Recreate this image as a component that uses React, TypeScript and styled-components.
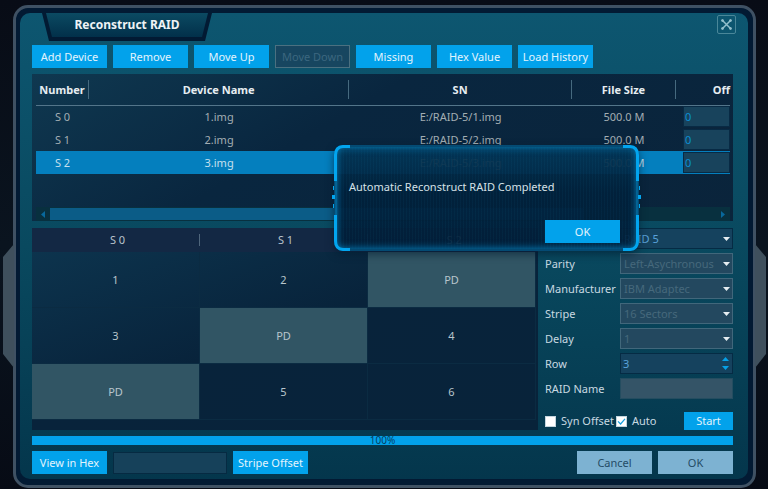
import React, { useState } from "react";
import styled, { createGlobalStyle, css } from "styled-components";

const GlobalStyle = createGlobalStyle`
  *, *::before, *::after { box-sizing: border-box; }
  body {
    margin: 0;
    background: #0a121c;
    color: #cfd8dd;
    font-family: "Noto Sans", "Open Sans", sans-serif;
    font-size: 11px;
    line-height: 16px;
  }
  button, input, select { font: inherit; margin: 0; }
`;

const Page = styled.div`
  display: flex;
  min-height: 100vh;
  padding: 5px 12px 1px 13px;
  background: linear-gradient(#080c16, #0a141f 50%, #070b15);
`;

const Frame = styled.main`
  position: relative;
  flex: 1;
  display: flex;
  border: 3px solid #3f5163;
  border-radius: 15px;
  background: #021a33;
  padding: 5px 5px 6px 4px;
`;

const Handle = styled.svg<{ $side: "left" | "right" }>`
  position: absolute;
  top: 236px;
  ${(p) => p.$side}: -13px;
  width: 11px;
  height: 124px;
  fill: #3f505d;
  ${(p) => p.$side === "right" && css`transform: scaleX(-1);`}
`;

const Panel = styled.div`
  position: relative;
  flex: 1;
  min-width: 0;
  display: flex;
  flex-direction: column;
  padding: 0 15px 5px 12px;
  border-radius: 10px;
  background: linear-gradient(#0d5670, #09495f 50%, #04364c);
`;

const TitleBar = styled.header`
  display: flex;
  justify-content: space-between;
  margin: 0 -3px 4px 10px;
`;

const TitleTab = styled.div`
  width: 170px;
  height: 28px;
  padding: 0 4px 4px;
  background: #021a33;
  clip-path: polygon(0 0, 100% 0, calc(100% - 7px) 100%, 7px 100%);
`;

const Title = styled.h1`
  margin: 0;
  height: 24px;
  font-size: 12px;
  line-height: 24px;
  text-align: center;
  color: #eef3f5;
  background: linear-gradient(#0b4a62, #02304a);
  clip-path: polygon(0 0, 100% 0, calc(100% - 6px) 100%, 6px 100%);
`;

const CloseButton = styled.button`
  display: grid;
  place-items: center;
  width: 19px;
  height: 19px;
  margin-top: 2px;
  padding: 0;
  border: 1px solid #4a8799;
  border-radius: 2px;
  background: transparent;
  svg { width: 13px; height: 13px; stroke: #93bfcc; fill: #93bfcc; }
`;

const Toolbar = styled.div`
  display: flex;
  gap: 6px;
  margin-bottom: 6px;
`;

const Button = styled.button<{ $muted?: boolean; $small?: boolean }>`
  min-width: ${(p) => (p.$small ? 49 : 75)}px;
  height: ${(p) => (p.$small ? 18 : 23)}px;
  padding: 0;
  border: 0;
  white-space: nowrap;
  color: ${(p) => (p.$muted ? "#244c66" : "#e2f4fd")};
  background: ${(p) => (p.$muted ? "#7db2d2" : "#02a2eb")};
  &:disabled {
    color: #3c677f;
    background: #174660;
    border: 1px solid #4b7080;
  }
`;

const DevicePanel = styled.section`
  display: flex;
  flex-direction: column;
  min-height: 147px;
  margin-bottom: 7px;
  padding: 0 3px 0 4px;
  background: linear-gradient(150deg, #0f3850, #09263f 40%, #0a243b);
`;

const DeviceTable = styled.table`
  width: 100%;
  table-layout: fixed;
  border-collapse: collapse;
  text-align: center;
`;

const HeadRow = styled.tr`
  height: 31px;
  border-bottom: 1px solid #53758a;
`;

const HeadCell = styled.th`
  padding: 0;
  color: #e6edf1;
  white-space: nowrap;
`;

const HeadLabel = styled.span<{ $last?: boolean }>`
  display: block;
  height: 19px;
  line-height: 19px;
  ${(p) => (p.$last ? css`text-align: right;` : css`border-right: 1px solid #466a7f;`)}
`;

const DeviceRow = styled.tr<{ $selected: boolean }>`
  height: 23px;
  color: ${(p) => (p.$selected ? "#c6e0ee" : "#a3aeb3")};
  background: ${(p) => (p.$selected ? "#047fbe" : "transparent")};
`;

const Col = styled.col<{ $w?: string }>`
  width: ${(p) => p.$w ?? "auto"};
`;

const Cell = styled.td`
  padding: 0;
  line-height: 20px;
`;

const OffsetCell = styled(Cell)`
  padding-left: 7px;
`;

const OffsetInput = styled.input`
  display: block;
  width: 100%;
  height: 21px;
  padding: 0 1px;
  border: 1px solid #082a44;
  background: #18435c;
  color: #0a8fd3;
`;

const ScrollBar = styled.div`
  display: grid;
  grid-template-columns: 14px 1fr 14px;
  height: 14px;
  margin-top: auto;
  background: #08303f;
`;

const ScrollArrow = styled.button`
  display: grid;
  place-items: center;
  padding: 0;
  border: 0;
  background: transparent;
  svg { width: 4px; height: 7px; fill: #08689c; }
`;

const ScrollThumb = styled.div`
  width: 80%;
  height: 12px;
  margin-top: 1px;
  background: #0b5c87;
`;

const Workspace = styled.div`
  display: grid;
  grid-template-columns: minmax(0, 1fr) 188px;
  gap: 7px;
  margin-bottom: 6px;
`;

const LayoutPanel = styled.div`
  padding: 0 2px 10px 0;
  background:
    linear-gradient(#132844, #132844) top / 100% 24px no-repeat,
    linear-gradient(160deg, #0d3650, #08233b 50%, #08233a);
`;

const Layout = styled.table`
  width: 100%;
  table-layout: fixed;
  border-collapse: separate;
  border-spacing: 0;
  text-align: center;
`;

const LayoutHead = styled.th`
  height: 24px;
  padding: 0;
  font-weight: 400;
  color: #b9c4cc;
`;

const LayoutHeadLabel = styled.span<{ $line: boolean }>`
  display: block;
  height: 12px;
  padding-left: 4px;
  line-height: 12px;
  ${(p) => p.$line && css`border-right: 1px solid #4f667c;`}
`;

const LayoutCell = styled.td<{ $parity: boolean }>`
  height: 56px;
  padding: 0;
  color: #b8c5cc;
  border: solid #0b2b42;
  border-width: 0 1px 1px 0;
  ${(p) => p.$parity && css`background: #315564;`}
`;

const Form = styled.form`
  display: flex;
  flex-direction: column;
  justify-content: space-between;
`;

const Fields = styled.div`
  display: grid;
  grid-template-columns: 75px 1fr;
  grid-auto-rows: 21px;
  row-gap: 4px;
  align-items: center;
`;

const FieldLabel = styled.label`
  color: #c8d9e1;
  white-space: nowrap;
`;

const Control = styled.div`
  position: relative;
  grid-column: 2;
  height: 21px;
`;

const Select = styled.select`
  appearance: none;
  width: 100%;
  height: 100%;
  padding: 0 0 0 3px;
  border: 1px solid #052b44;
  border-radius: 0;
  background: #15425e;
  color: #5aa2da;
  &:disabled {
    opacity: 1;
    border-color: #41677b;
    background: #23485f;
    color: #46697c;
  }
`;

const Caret = styled.svg`
  position: absolute;
  right: 3px;
  top: 9px;
  width: 7px;
  height: 4px;
  fill: #e6eef2;
  pointer-events: none;
`;

const TextInput = styled.input<{ $flat?: boolean }>`
  appearance: textfield;
  width: 100%;
  height: 100%;
  padding: 0 2px;
  border: 1px solid ${(p) => (p.$flat ? "#244d60" : "#052b44")};
  background: ${(p) => (p.$flat ? "#345467" : "#15425e")};
  color: #5aa2da;
  &::-webkit-inner-spin-button { appearance: none; }
`;

const Spinner = styled.div`
  position: absolute;
  right: 4px;
  top: 3px;
  display: grid;
  gap: 3px;
`;

const SpinButton = styled.button`
  display: grid;
  place-items: center;
  width: 8px;
  height: 6px;
  padding: 0;
  border: 0;
  background: transparent;
  svg { width: 7px; height: 4px; fill: #06a0e6; }
`;

const Options = styled.div`
  display: flex;
  align-items: center;
`;

const CheckLabel = styled.label`
  display: flex;
  align-items: center;
  gap: 5px;
  margin-right: 2px;
  color: #c8d9e1;
  white-space: nowrap;
`;

const CheckBox = styled.input`
  appearance: none;
  width: 11px;
  height: 11px;
  background: #fff;
  border: 1px solid #c3d5de;
  &:checked {
    background: #fff url("data:image/svg+xml,%3Csvg xmlns='http://www.w3.org/2000/svg' viewBox='0 0 9 9'%3E%3Cpath d='M1 4.3 3.6 7 8 1.8' fill='none' stroke='%2318a0df' stroke-width='1.2'/%3E%3C/svg%3E") center / 9px no-repeat;
  }
`;

const Push = styled.div`
  margin-left: auto;
  display: flex;
  gap: 6px;
`;

const Progress = styled.div`
  height: 9px;
  margin-bottom: 6px;
  font-size: 10px;
  line-height: 9px;
  text-align: center;
  color: #043f62;
  background: #02a2eb;
`;

const Footer = styled.footer`
  display: flex;
  align-items: center;
  gap: 6px;
`;

const HexInput = styled.input`
  width: 114px;
  height: 22px;
  border: 1px solid #062a42;
  background: #16415a;
  color: #5aa2da;
`;

const Dialog = styled.section`
  position: absolute;
  left: 314px;
  top: 132px;
  width: 305px;
  height: 106px;
  display: flex;
  flex-direction: column;
  justify-content: space-between;
  padding: 34px 19px 8px 15px;
  border-radius: 9px;
  background:
    repeating-linear-gradient(90deg, rgba(20, 110, 150, 0.08) 0 1px, transparent 1px 3px),
    linear-gradient(rgba(3, 50, 80, 0.94), rgba(1, 33, 60, 0.94) 45%, rgba(1, 30, 56, 0.94));
  box-shadow:
    0 3px 8px rgba(0, 25, 45, 0.6),
    inset 0 0 0 2px rgba(4, 72, 112, 0.9),
    inset 0 0 7px 3px #0577b0;
`;

const DialogFrame = styled.svg`
  position: absolute;
  left: -2px;
  top: 0;
  width: 309px;
  height: 106px;
  pointer-events: none;
`;

const Message = styled.p`
  position: relative;
  margin: 0;
  color: #d6e1e7;
`;

const DialogActions = styled.div`
  position: relative;
  display: flex;
  justify-content: flex-end;
`;

const devices = [
  { id: "S 0", name: "1.img", sn: "E:/RAID-5/1.img", size: "500.0 M" },
  { id: "S 1", name: "2.img", sn: "E:/RAID-5/2.img", size: "500.0 M" },
  { id: "S 2", name: "3.img", sn: "E:/RAID-5/3.img", size: "500.0 M" },
];

const blocks = [
  ["1", "2", "PD"],
  ["3", "PD", "4"],
  ["PD", "5", "6"],
];

const actions = ["Add Device", "Remove", "Move Up", "Move Down", "Missing", "Hex Value", "Load History"];
const columns = ["Number", "Device Name", "SN", "File Size", "Off"];

const selects = [
  { id: "parity", label: "Parity", value: "Left-Asychronous" },
  { id: "manufacturer", label: "Manufacturer", value: "IBM Adaptec" },
  { id: "stripe", label: "Stripe", value: "16 Sectors" },
  { id: "delay", label: "Delay", value: "1" },
];

const DownCaret = () => (
  <Caret viewBox="0 0 7 4" aria-hidden="true">
    <path d="M0 0H7L3.5 4Z" />
  </Caret>
);

export default function App() {
  const [selected, setSelected] = useState(2);
  const [rows, setRows] = useState(3);
  const [open, setOpen] = useState(true);

  return (
    <>
      <GlobalStyle />
      <Page>
        <Frame>
          {(["left", "right"] as const).map((side) => (
            <Handle key={side} $side={side} viewBox="0 0 11 124" aria-hidden="true">
              <path d="M11 0 0 13V110L11 124Z" />
            </Handle>
          ))}
          <Panel>
            <TitleBar>
              <TitleTab>
                <Title>Reconstruct RAID</Title>
              </TitleTab>
              <CloseButton aria-label="Close">
                <svg viewBox="0 0 13 13">
                  <path d="M2.500 2.500 10.500 10.500M10.500 2.500 2.500 10.500" strokeWidth="1.500" />
                  <circle cx="2.500" cy="2.500" r="1" />
                  <circle cx="10.500" cy="2.500" r="1" />
                  <circle cx="2.500" cy="10.500" r="1" />
                  <circle cx="10.500" cy="10.500" r="1" />
                </svg>
              </CloseButton>
            </TitleBar>

            <Toolbar>
              {actions.map((a) => (
                <Button key={a} disabled={a === "Move Down"}>{a}</Button>
              ))}
            </Toolbar>

            <DevicePanel>
              <DeviceTable>
                <colgroup>
                  <Col $w="53px" />
                  <Col $w="37.5%" />
                  <Col />
                  <Col $w="104px" />
                  <Col $w="54px" />
                </colgroup>
                <thead>
                  <HeadRow>
                    {columns.map((c, i) => (
                      <HeadCell key={c}>
                        <HeadLabel $last={i === columns.length - 1}>{c}</HeadLabel>
                      </HeadCell>
                    ))}
                  </HeadRow>
                </thead>
                <tbody>
                  {devices.map((d, i) => (
                    <DeviceRow key={d.id} $selected={i === selected} onClick={() => setSelected(i)}>
                      <Cell>{d.id}</Cell>
                      <Cell>{d.name}</Cell>
                      <Cell>{d.sn}</Cell>
                      <Cell>{d.size}</Cell>
                      <OffsetCell>
                        <OffsetInput aria-label={`Offset of ${d.id}`} defaultValue="0" />
                      </OffsetCell>
                    </DeviceRow>
                  ))}
                </tbody>
              </DeviceTable>
              <ScrollBar>
                <ScrollArrow aria-label="Scroll left">
                  <svg viewBox="0 0 4 7"><path d="M4 0V7L0 3.5Z" /></svg>
                </ScrollArrow>
                <ScrollThumb />
                <ScrollArrow aria-label="Scroll right">
                  <svg viewBox="0 0 4 7"><path d="M0 0V7L4 3.5Z" /></svg>
                </ScrollArrow>
              </ScrollBar>
            </DevicePanel>

            <Workspace>
              <LayoutPanel>
                <Layout>
                  <thead>
                    <tr>
                      {devices.map((d, i) => (
                        <LayoutHead key={d.id}>
                          <LayoutHeadLabel $line={i < 2}>{d.id}</LayoutHeadLabel>
                        </LayoutHead>
                      ))}
                    </tr>
                  </thead>
                  <tbody>
                    {blocks.map((row, r) => (
                      <tr key={r}>
                        {row.map((b, c) => (
                          <LayoutCell key={c} $parity={b === "PD"}>{b}</LayoutCell>
                        ))}
                      </tr>
                    ))}
                  </tbody>
                </Layout>
              </LayoutPanel>

              <Form onSubmit={(e) => e.preventDefault()}>
                <Fields>
                  <Control>
                    <Select aria-label="RAID level">
                      <option>RAID 5</option>
                    </Select>
                    <DownCaret />
                  </Control>
                  {selects.map((s) => (
                    <React.Fragment key={s.id}>
                      <FieldLabel htmlFor={s.id}>{s.label}</FieldLabel>
                      <Control>
                        <Select id={s.id} disabled>
                          <option>{s.value}</option>
                        </Select>
                        <DownCaret />
                      </Control>
                    </React.Fragment>
                  ))}
                  <FieldLabel htmlFor="row">Row</FieldLabel>
                  <Control>
                    <TextInput id="row" type="number" value={rows} onChange={(e) => setRows(Number(e.target.value))} />
                    <Spinner>
                      <SpinButton type="button" aria-label="Increase" onClick={() => setRows(rows + 1)}>
                        <svg viewBox="0 0 7 4"><path d="M0 4H7L3.5 0Z" /></svg>
                      </SpinButton>
                      <SpinButton type="button" aria-label="Decrease" onClick={() => setRows(rows - 1)}>
                        <svg viewBox="0 0 7 4"><path d="M0 0H7L3.5 4Z" /></svg>
                      </SpinButton>
                    </Spinner>
                  </Control>
                  <FieldLabel htmlFor="raid-name">RAID Name</FieldLabel>
                  <Control>
                    <TextInput id="raid-name" $flat />
                  </Control>
                </Fields>
                <Options>
                  <CheckLabel><CheckBox type="checkbox" />Syn Offset</CheckLabel>
                  <CheckLabel><CheckBox type="checkbox" defaultChecked />Auto</CheckLabel>
                  <Push><Button $small>Start</Button></Push>
                </Options>
              </Form>
            </Workspace>

            <Progress role="progressbar" aria-valuenow={100}>100%</Progress>

            <Footer>
              <Button>View in Hex</Button>
              <HexInput aria-label="Stripe offset value" />
              <Button>Stripe Offset</Button>
              <Push>
                <Button $muted>Cancel</Button>
                <Button $muted>OK</Button>
              </Push>
            </Footer>

            {open && (
              <Dialog role="dialog" aria-label="Reconstruct result">
                <DialogFrame viewBox="0 0 309 106" aria-hidden="true">
                  <path d="M4 35V71M305 35V71" stroke="#0579b1" />
                  <g fill="none" stroke="#02a5ef" strokeWidth="3">
                    <path d="M18 1.500H11Q3.500 2 3.500 10V36M3.500 70V96Q3.500 104 11 104.500H18" />
                    <path d="M291 1.500H298Q305.500 2 305.500 10V36M305.500 70V96Q305.500 104 298 104.500H291" />
                  </g>
                  <g fill="#02a5ef">
                    <path d="M1 41h1v4h-1zM0 50h3v4h-3zM1 59h1v4h-1z" />
                    <path d="M307 41h1v4h-1zM306 50h3v4h-3zM307 59h1v4h-1z" />
                  </g>
                </DialogFrame>
                <Message>Automatic Reconstruct RAID Completed</Message>
                <DialogActions>
                  <Button onClick={() => setOpen(false)}>OK</Button>
                </DialogActions>
              </Dialog>
            )}
          </Panel>
        </Frame>
      </Page>
    </>
  );
}
